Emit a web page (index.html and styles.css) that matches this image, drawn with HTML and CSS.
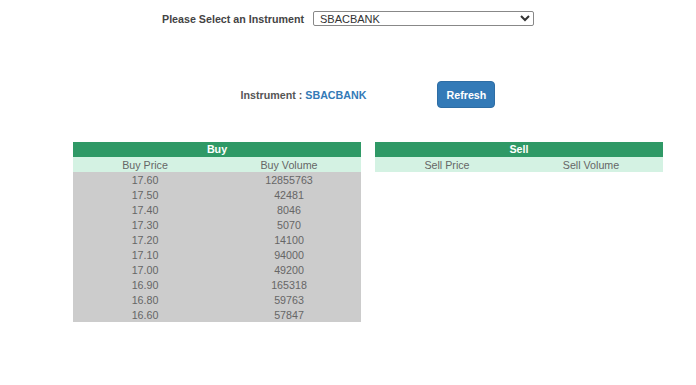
FILE: index.html
```html
<!DOCTYPE html>
<html lang="en">
<head>
  <meta charset="UTF-8" />
  <meta name="viewport" content="width=device-width, initial-scale=1.0"/>
  <title>Market Depth</title>
  <link rel="stylesheet" href="styles.css">
</head>
<body>
  <div class="picker">
    <label for="instrument">Please Select an Instrument</label>
    <select id="instrument">
      <option>SBACBANK</option>
    </select>
  </div>

  <div class="depth">
    <div class="instrument-row">
      <span class="instrument-name">Instrument : <b>SBACBANK</b></span>
      <button class="refresh">Refresh</button>
    </div>

    <div class="books">
      <table class="book">
        <tr><th colspan="2">Buy</th></tr>
        <tr class="cols"><td>Buy Price</td><td>Buy Volume</td></tr>
        <tr><td>17.60</td><td>12855763</td></tr>
        <tr><td>17.50</td><td>42481</td></tr>
        <tr><td>17.40</td><td>8046</td></tr>
        <tr><td>17.30</td><td>5070</td></tr>
        <tr><td>17.20</td><td>14100</td></tr>
        <tr><td>17.10</td><td>94000</td></tr>
        <tr><td>17.00</td><td>49200</td></tr>
        <tr><td>16.90</td><td>165318</td></tr>
        <tr><td>16.80</td><td>59763</td></tr>
        <tr><td>16.60</td><td>57847</td></tr>
      </table>

      <table class="book">
        <tr><th colspan="2">Sell</th></tr>
        <tr class="cols"><td>Sell Price</td><td>Sell Volume</td></tr>
      </table>
    </div>
  </div>
</body>
</html>
```

FILE: styles.css
```css
body {
  margin: 0;
  font-family: "Liberation Sans", Arial, sans-serif;
  font-size: 10.7px;
  color: #666;
  background: #fff;
}
.picker {
  display: flex;
  justify-content: center;
  align-items: center;
  gap: 9px;
  padding-top: 11px;
}
.picker label {
  font-weight: bold;
  color: #444;
}
.picker select {
  width: 221px;
  height: 15px;
  padding: 0 2px;
  font-family: "Liberation Sans", Arial, sans-serif;
  font-size: 11px;
  color: #333;
  border: 1px solid #888;
  border-radius: 2px;
  background: #fff;
}
.depth {
  width: 590px;
  margin-left: 73px;
}
.instrument-row {
  display: flex;
  justify-content: center;
  align-items: center;
  gap: 71px;
  margin-top: 55px;
}
.instrument-name {
  font-weight: bold;
  color: #555;
}
.instrument-name b {
  color: #337ab7;
}
.refresh {
  width: 58px;
  height: 27px;
  padding: 0;
  font-family: "Liberation Sans", Arial, sans-serif;
  font-size: 10.7px;
  font-weight: bold;
  color: #fff;
  background-color: #337ab7;
  border: 1px solid #2e6da4;
  border-radius: 4px;
}
.books {
  display: flex;
  align-items: flex-start;
  gap: 14px;
  margin-top: 34px;
}
.book {
  width: 288px;
  border-collapse: collapse;
  table-layout: fixed;
}
.book th {
  height: 15px;
  padding: 0;
  background: #2f9966;
  color: #fff;
  font-weight: bold;
  line-height: 15px;
}
.book td {
  height: 15px;
  padding: 1px 0 0;
  box-sizing: border-box;
  text-align: center;
  line-height: 14px;
  background: #cccccc;
}
.book .cols td {
  background: #d4f2e3;
}
```
